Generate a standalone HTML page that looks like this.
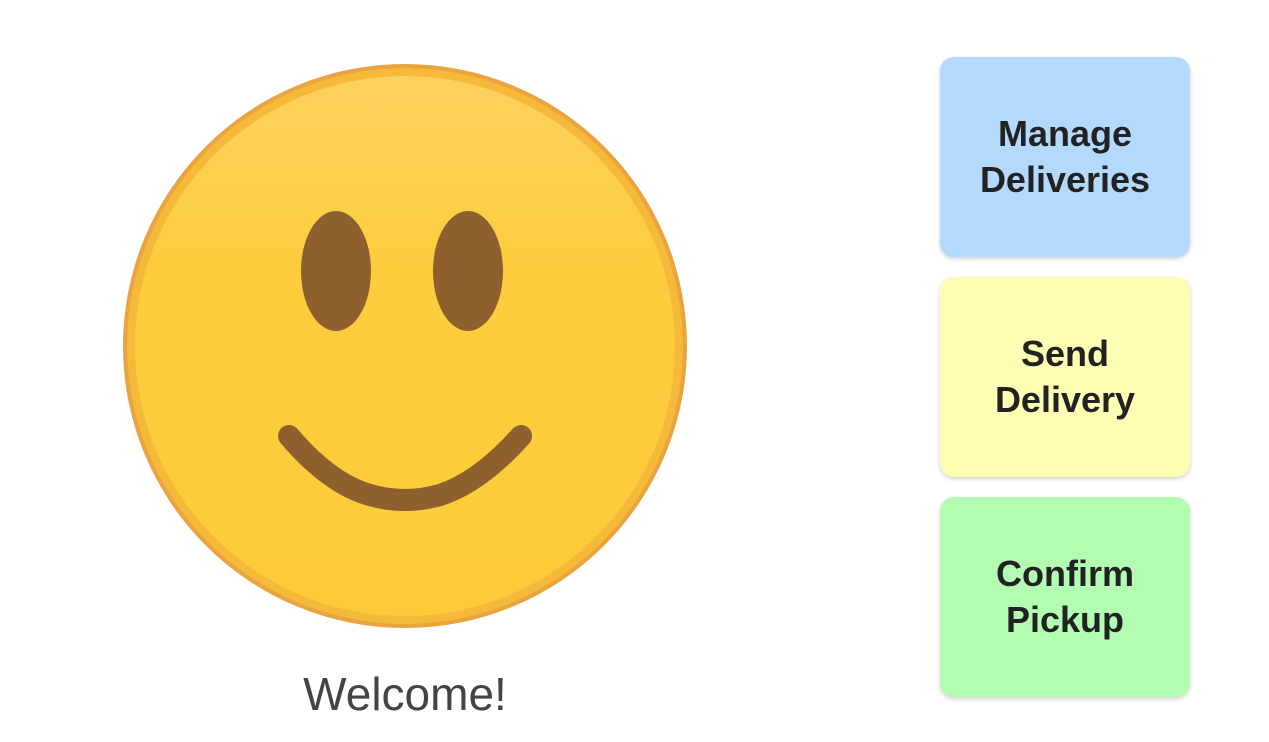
<!DOCTYPE html>
<html><head><style>
html,body{margin:0;padding:0;background:#fff;width:1269px;height:742px;overflow:hidden;position:relative;font-family:"Liberation Sans",sans-serif}
.btn{position:absolute;left:940px;width:250px;height:200px;border-radius:14px;box-shadow:0 2px 4px rgba(0,0,0,0.18);display:flex;align-items:center;justify-content:center;text-align:center;font-weight:bold;font-size:36px;line-height:46px;color:#222}
.w{position:absolute;left:205px;width:400px;top:664px;text-align:center;font-size:46px;color:#444;line-height:60px}
</style></head><body>
<svg width="1269" height="742" style="position:absolute;left:0;top:0">
<defs><linearGradient id="g" x1="0" y1="0" x2="0" y2="1">
<stop offset="0" stop-color="#fdd15e"/><stop offset="0.35" stop-color="#fdcd3e"/><stop offset="1" stop-color="#fdcb39"/></linearGradient></defs>
<circle cx="405" cy="346" r="282" fill="#e9a33f"/>
<circle cx="405" cy="346" r="278" fill="#f6b93a"/>
<circle cx="405" cy="346" r="270" fill="url(#g)"/>
<ellipse cx="336" cy="271" rx="35" ry="60" fill="#8e602d"/>
<ellipse cx="468" cy="271" rx="35" ry="60" fill="#8e602d"/>
<path d="M289 436 Q330 484 370 495 Q405 505 440 495 Q480 482 521 436" fill="none" stroke="#8e602d" stroke-width="22" stroke-linecap="round"/>
</svg>
<div class="w">Welcome!</div>
<div class="btn" style="top:57px;background:#b3d9fd">Manage<br>Deliveries</div>
<div class="btn" style="top:277px;background:#fdfdb3">Send<br>Delivery</div>
<div class="btn" style="top:497px;background:#b3fdb3">Confirm<br>Pickup</div>
</body></html>
